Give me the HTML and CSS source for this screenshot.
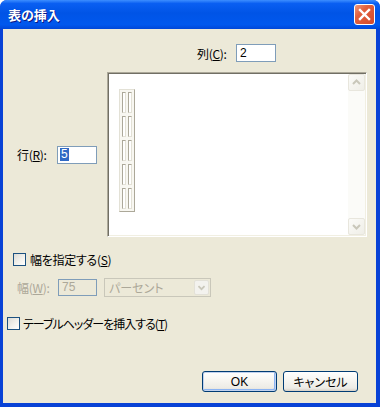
FILE: index.html
```html
<!DOCTYPE html>
<html lang="ja">
<head>
  <meta charset="UTF-8">
  <title>表の挿入</title>
  <link rel="stylesheet" href="styles.css">
</head>
<body>

<div class="window">
  <div class="titlebar">
    <span class="title">表の挿入</span>
    <button class="close" aria-label="閉じる">
      <svg width="21" height="21" viewBox="0 0 21 21"><path d="M6 6 L15 15 M15 6 L6 15" stroke="#fff" stroke-width="2.4" stroke-linecap="square"/></svg>
    </button>
  </div>

  <div class="client">
    <div class="cols-row">
      <label class="lbl cols-lbl" for="cols">列(<u>C</u>):</label>
      <input class="field" id="cols" type="text" value="2">
    </div>

    <div class="main">
      <div class="rows-side">
        <label class="lbl rows-lbl" for="rows">行(<u>R</u>):</label>
        <div class="field rows-field"><span class="sel">5</span></div>
      </div>

      <div class="preview">
        <div class="canvas">
          <div class="mini-table">
            <span></span><span></span>
            <span></span><span></span>
            <span></span><span></span>
            <span></span><span></span>
            <span></span><span></span>
          </div>
        </div>
        <div class="scrollbar">
          <div class="sb-btn">
            <svg width="15" height="15" viewBox="0 0 15 15"><path d="M4 9 L7.5 5.5 L11 9" fill="none" stroke="#c9c7ba" stroke-width="2"/></svg>
          </div>
          <div class="sb-btn">
            <svg width="15" height="15" viewBox="0 0 15 15"><path d="M4 6 L7.5 9.5 L11 6" fill="none" stroke="#c9c7ba" stroke-width="2"/></svg>
          </div>
        </div>
      </div>
    </div>

    <div class="check-row width-check">
      <span class="checkbox"></span>
      <span class="lbl">幅を指定する(<u>S</u>)</span>
    </div>

    <div class="width-row">
      <span class="lbl disabled width-lbl">幅(<u>W</u>):</span>
      <div class="field dis-field">75</div>
      <div class="dis-select">
        <span class="opt">パーセント</span>
        <span class="dd-btn">
          <svg width="15" height="15" viewBox="0 0 15 15"><path d="M4 6 L7.5 9.5 L11 6" fill="none" stroke="#c9c7ba" stroke-width="2"/></svg>
        </span>
      </div>
    </div>

    <div class="check-row header-check">
      <span class="checkbox"></span>
      <span class="lbl tight">テーブルヘッダーを挿入する(<u>T</u>)</span>
    </div>

    <div class="buttons">
      <button class="btn btn-default">OK</button>
      <button class="btn">キャンセル</button>
    </div>
  </div>
</div>

</body>
</html>
```

FILE: styles.css
```css
body {
  margin: 0;
  background: #ffffff;
  font-family: "Noto Sans CJK JP", sans-serif;
  font-size: 12px;
  font-feature-settings: "palt";
}
.window {
  width: 380px;
  height: 407px;
  display: flex;
  flex-direction: column;
  background: #0842d6;
  border-radius: 7px 7px 0 0;
  overflow: hidden;
}
.titlebar {
  height: 29px;
  display: flex;
  align-items: center;
  padding: 0 5px 0 8px;
  background: linear-gradient(#3d8eff 0%, #0a5ff2 12%, #0054e6 45%, #0058ee 85%, #0047d8 100%);
}
.title {
  flex: 1;
  color: #fff;
  font-size: 13px;
  font-weight: bold;
  text-shadow: 1px 1px 0 #0a1883;
}
.close {
  width: 21px;
  height: 21px;
  padding: 0;
  border: 1px solid #fff;
  border-radius: 3px;
  background: linear-gradient(135deg, #f09a7e 0%, #e2613f 35%, #d3492a 100%);
  display: flex;
  align-items: center;
  justify-content: center;
}
.close svg {
  margin: -1px;
}
.client {
  flex: 1;
  margin: 0 4px 4px 3px;
  background: #ece9d8;
  display: flex;
  flex-direction: column;
  color: #000;
}
.lbl {
  letter-spacing: -0.3px;
}
.tight {
  letter-spacing: -1px;
}
.field {
  box-sizing: border-box;
  width: 40px;
  height: 18px;
  border: 1px solid #7f9db9;
  background: #fff;
  font-family: "Liberation Sans", sans-serif;
  font-size: 12px;
  padding: 0 3px;
  margin: 0;
  line-height: 16px;
  outline: none;
}
.cols-row {
  display: flex;
  align-items: center;
  margin-top: 15px;
  padding-left: 194px;
}
.cols-lbl {
  width: 39px;
}
.main {
  display: flex;
  margin-top: 10px;
  height: 165px;
}
.rows-side {
  width: 104px;
  display: flex;
  align-items: center;
  padding-left: 14px;
  box-sizing: border-box;
}
.rows-lbl {
  width: 40px;
}
.rows-field {
  padding: 0 2px;
  display: flex;
  align-items: center;
}
.sel {
  background: #316ac5;
  color: #fff;
  line-height: 13px;
  padding: 0 1px;
}
.preview {
  width: 260px;
  box-sizing: border-box;
  border: 1px solid;
  border-color: #aca899 #ffffff #ffffff #aca899;
  box-shadow: inset 1px 1px 0 #716f64, inset -1px -1px 0 #f1efe2;
  background: #fff;
  display: flex;
  padding: 1px;
}
.canvas {
  flex: 1;
  padding: 15px 0 0 10px;
}
.mini-table {
  display: grid;
  grid-template-columns: 4px 4px;
  grid-auto-rows: 21px;
  gap: 3px 2px;
  width: max-content;
  padding: 2px;
  border: 1px solid;
  border-color: #e3e1d6 #aca899 #aca899 #e3e1d6;
  background: #f8f7f1;
}
.mini-table span {
  box-sizing: border-box;
  border: 1px solid;
  border-color: #aca899 #e3e1d6 #e3e1d6 #aca899;
  background: #ffffff;
}
.scrollbar {
  width: 17px;
  background: #fbfbf8;
  display: flex;
  flex-direction: column;
  justify-content: space-between;
}
.sb-btn {
  height: 17px;
  box-sizing: border-box;
  border: 1px solid #e8e6dd;
  border-radius: 2px;
  background: linear-gradient(135deg, #fbfbf8, #efeee7);
  display: flex;
  align-items: center;
  justify-content: center;
}
.check-row {
  display: flex;
  align-items: center;
  height: 13px;
}
.checkbox {
  box-sizing: border-box;
  width: 13px;
  height: 13px;
  border: 1px solid #1c5180;
  background: linear-gradient(135deg, #dcdbd5 0%, #f4f3ee 60%, #ffffff 100%);
}
.width-check {
  margin-top: 16px;
  padding-left: 10px;
  gap: 4px;
}
.width-row {
  display: flex;
  align-items: center;
  margin-top: 12px;
  padding-left: 14px;
  height: 19px;
}
.disabled {
  color: #aca899;
}
.width-lbl {
  width: 41px;
}
.dis-field {
  width: 39px;
  height: 17px;
  background: #ece9d8;
  color: #aca899;
  line-height: 15px;
}
.dis-select {
  margin-left: 7px;
  width: 107px;
  height: 19px;
  box-sizing: border-box;
  border: 1px solid #c9c7ba;
  display: flex;
  align-items: center;
  padding: 1px;
}
.opt {
  flex: 1;
  color: #aca899;
  padding-left: 3px;
}
.dd-btn {
  width: 15px;
  height: 15px;
  border: 1px solid #e3e1d8;
  border-radius: 2px;
  background: #f3f2ee;
  box-sizing: border-box;
  display: flex;
  align-items: center;
  justify-content: center;
}
.header-check {
  margin-top: 20px;
  padding-left: 4px;
  gap: 3px;
}
.buttons {
  margin-top: auto;
  display: flex;
  justify-content: flex-end;
  gap: 6px;
  padding: 0 18px 11px 0;
}
.btn {
  width: 75px;
  height: 21px;
  border: 1px solid #003c74;
  border-radius: 3px;
  background: linear-gradient(#ffffff 0%, #f5f4ef 50%, #ecebe5 85%, #d6d0c5 100%);
  font-family: "Liberation Sans", "Noto Sans CJK JP", sans-serif;
  font-size: 12px;
  font-feature-settings: "palt";
  color: #000;
  padding: 0;
}
.btn-default {
  box-shadow: inset 0 0 0 1px #c1d2ee, inset -1px -1px 0 1px #8cb4f2;
}
```
